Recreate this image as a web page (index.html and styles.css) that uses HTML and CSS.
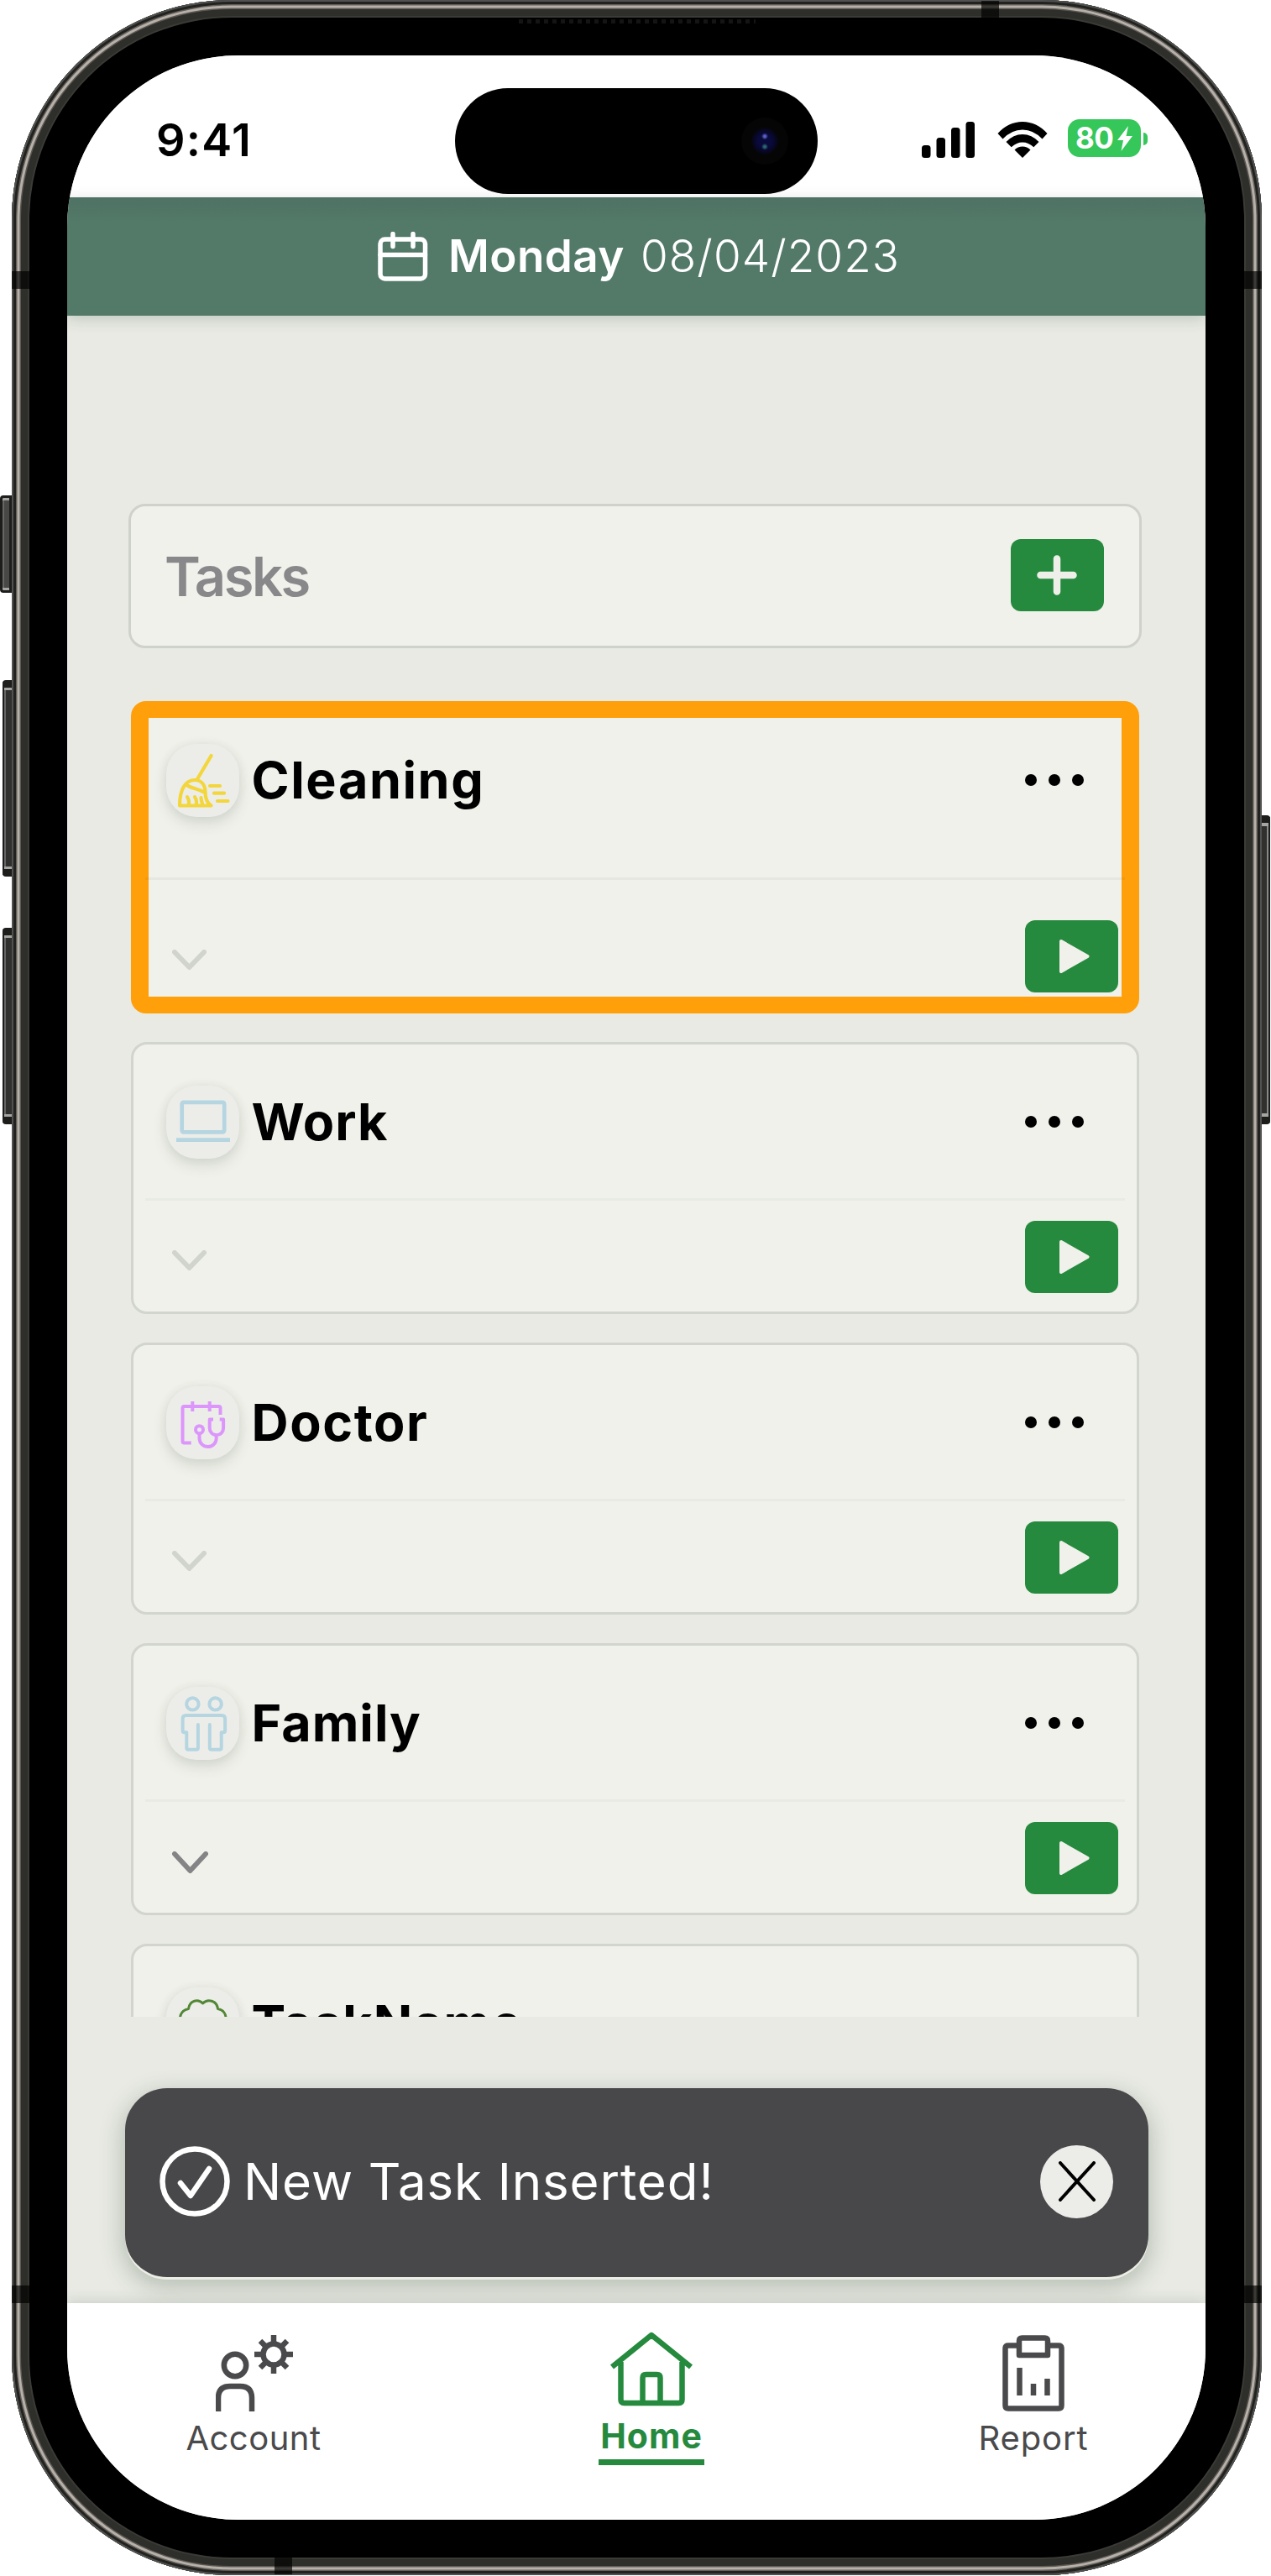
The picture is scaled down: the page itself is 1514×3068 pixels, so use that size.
FILE: index.html
```html
<!DOCTYPE html>
<html lang="en">
<head>
<meta charset="utf-8">
<title>Tasks</title>
<link rel="stylesheet" href="styles.css">
</head>
<body>
<div class="device">
  <i class="key key-mute"></i><i class="key key-up"></i><i class="key key-down"></i><i class="key key-power"></i>
  <i class="band band-tl"></i><i class="band band-tr"></i><i class="band band-bl"></i><i class="band band-br"></i>
  <i class="band band-top"></i><i class="band band-bottom"></i><i class="speaker"></i>
  <div class="screen">
    <div class="status">
      <span class="clock">9:41</span>
      <div class="island"><i class="camera"></i></div>
      <div class="indicators">
        <svg class="signal" width="63" height="43" viewBox="0 0 63 43"><rect x="0" y="28" width="10.5" height="15" rx="3.5"/><rect x="17.5" y="19" width="10.5" height="24" rx="3.5"/><rect x="35" y="7" width="10.5" height="36" rx="3.5"/><rect x="52.5" y="0" width="10.5" height="43" rx="3.5"/></svg>
        <svg class="wifi" width="60" height="43" viewBox="0 0 60 43"><path d="M0.500 14Q13 0 30 0t29.500 14l-6 6.500Q43 9.500 30 9.500T6.500 20.500z"/><path d="M10.500 24Q19 15 30 15t19.500 9l-6.200 6.200Q37 24.500 30 24.500T16.700 30.200z"/><path d="M20.500 33.500Q24.500 29.500 30 29.500t9.500 4L30 43z"/></svg>
        <div class="battery"><span>80</span><svg width="18" height="30" viewBox="0 0 18 30"><path d="M13 0 0 17h7L4.500 30 18 12h-7.500z"/></svg></div>
      </div>
    </div>
    <header class="datebar">
      <svg width="60" height="60" viewBox="0 0 60 60"><rect x="3" y="9" width="53.500" height="47" rx="5.500"/><path d="M3 27.500h53.500M18 2.500v15M42 2.500v15"/></svg>
      <strong>Monday</strong><span>08/04/2023</span>
    </header>
    <main class="content">
      <section class="taskbar">
        <h1>Tasks</h1>
        <button class="btn" aria-label="Add"><svg width="48" height="48" viewBox="0 0 48 48"><path class="plus" d="M24 4.500v39M4.500 24h39"/></svg></button>
      </section>
      <div class="list">
        <article class="card active">
          <div class="head"><span class="badge"><svg class="broom" width="87" height="87" viewBox="0 0 87 87"><path d="M53.600 14 37 42M16 73.500C16 54 23 43 34 43c8 0 12.500 6 12.500 14 0 8 3 14 7 16.500zM23.500 48.500C30 53 36 53 44 57M27 73v-4c0-4-2-5-2-6M36 73v-4c0-4-2-5-2-6M43.500 73c-1-4-2-6-2-9M52 50h12M57 58.700h12M61 68h12.500"/></svg></span><h2>Cleaning</h2><i class="dots"><b></b><b></b><b></b></i></div>
          <div class="foot"><svg class="chev" width="41" height="26" viewBox="0 0 41 26"><path d="M3 3l17.500 18L38 3"/></svg><button class="btn" aria-label="Start"><svg width="36" height="40" viewBox="0 0 36 40"><path class="play" d="M2 2 33.500 20 2 38z"/></svg></button></div>
        </article>
        <article class="card">
          <div class="head"><span class="badge"><svg class="laptop" width="87" height="87" viewBox="0 0 87 87"><rect x="18.700" y="19.800" width="50.500" height="35.500" rx="2"/><path d="M12 64.700h64"/></svg></span><h2 class="tight">Work</h2><i class="dots"><b></b><b></b><b></b></i></div>
          <div class="foot"><svg class="chev" width="41" height="26" viewBox="0 0 41 26"><path d="M3 3l17.500 18L38 3"/></svg><button class="btn" aria-label="Start"><svg width="36" height="40" viewBox="0 0 36 40"><path class="play" d="M2 2 33.500 20 2 38z"/></svg></button></div>
        </article>
        <article class="card">
          <div class="head"><span class="badge"><svg class="doctor" width="87" height="87" viewBox="0 0 87 87"><path d="M29.700 67.400H21.500q-2 0-2-2V26q0-2 2-2h41q2 0 2 2v8M31.300 18v12M51.700 18v12M39.500 57v5a10.100 10.100 0 0 0 20.200 0v-4M56 39.500h-4.300V50a8.200 8.200 0 0 0 16.400 0V39.500h-4.400"/><circle cx="39.500" cy="51.700" r="4.500"/></svg></span><h2>Doctor</h2><i class="dots"><b></b><b></b><b></b></i></div>
          <div class="foot"><svg class="chev" width="41" height="26" viewBox="0 0 41 26"><path d="M3 3l17.500 18L38 3"/></svg><button class="btn" aria-label="Start"><svg width="36" height="40" viewBox="0 0 36 40"><path class="play" d="M2 2 33.500 20 2 38z"/></svg></button></div>
        </article>
        <article class="card">
          <div class="head"><span class="badge"><svg class="family" width="87" height="87" viewBox="0 0 87 87"><circle cx="31.400" cy="20.400" r="7.200"/><circle cx="58.600" cy="20.400" r="7.200"/><path d="M37.900 45v27.700q0 2-2 2h-9.600q-2 0-2-2V54.300h-2.700q-2 0-2-2V38q0-4 4-4h42.500q4 0 4 4v14.300q0 2-2 2h-2.400v18.400q0 2-2 2h-9.900q-2 0-2-2V45"/></svg></span><h2 class="tight">Family</h2><i class="dots"><b></b><b></b><b></b></i></div>
          <div class="foot"><svg class="chev dark" width="43" height="28" viewBox="0 0 43 28"><path d="M3 3l18.500 20L40 3"/></svg><button class="btn" aria-label="Start"><svg width="36" height="40" viewBox="0 0 36 40"><path class="play" d="M2 2 33.500 20 2 38z"/></svg></button></div>
        </article>
        <article class="card">
          <div class="head"><span class="badge"><svg class="tree" width="87" height="87" viewBox="0 0 87 87"><path d="M24 48c-10-2-11-20 2.500-22.500C28 15 38 13.500 43.600 19 49 13.500 60 15 61.500 25.500 75 28 73 46 63 48zM43.600 40v34"/></svg></span><h2 class="tight">TaskName</h2></div>
        </article>
      </div>
    </main>
    <div class="toast">
      <svg width="84" height="84" viewBox="0 0 84 84"><circle cx="42" cy="42" r="38.500"/><path d="M25 44l12 15L59 27"/></svg>
      <p>New Task Inserted!</p>
      <button class="close" aria-label="Close"><svg width="44" height="48" viewBox="0 0 44 48"><path d="M2 2l40 44M42 2 2 46"/></svg></button>
    </div>
    <nav class="tabs">
      <a class="tab account"><svg width="92" height="92" viewBox="0 0 92 92"><circle cx="23" cy="36" r="13.200"/><path d="M3 91V75q0-14 14-14h12q14 0 14 14v16"/><circle cx="69" cy="23" r="12.500"/><path d="M69 0v11M69 35v11M46 23h11M81 23h11M53 7l7 7M78 32l7 7M85 7l-7 7M60 32l-7 7"/></svg><span>Account</span></a>
      <a class="tab home"><svg width="98" height="92" viewBox="0 0 98 92"><path d="M2 44 49 6l47 38M12.500 38v45q0 4 4 4h65q4 0 4-4V38M38.500 87V57q0-4 4-4h13q4 0 4 4v30"/></svg><span>Home</span></a>
      <a class="tab report"><svg width="74" height="92" viewBox="0 0 74 92"><path d="M18 12.500H7q-3.500 0-3.500 3.500v68q0 3.500 3.500 3.500h60q3.500 0 3.500-3.500V16q0-3.500-3.500-3.500H56"/><path d="M20 24V7q0-3.500 3.500-3.500h27Q54 3.500 54 7v17zM20.500 39v33M37 58v14M53.500 52v20"/></svg><span>Report</span></a>
    </nav>
  </div>
</div>
</body>
</html>
```
FILE: styles.css
```css
* { box-sizing: border-box; }
body { margin: 0; background: #fff; font-family: Inter, "Liberation Sans", sans-serif; color: #000; }
svg { display: block; fill: none; flex: none; stroke-linejoin: round; }
h1, h2, p { margin: 0; line-height: 1; white-space: nowrap; }
button { border: 0; padding: 0; display: flex; align-items: center; justify-content: center; }

/* Device shell */
.device {
  position: relative; width: 1489px; height: 3067px; margin-left: 14px; padding: 66px 67.5px 66px 66px;
  border-radius: 262px; background: #000;
  box-shadow: inset 0 0 0 2px #51524f, inset 0 0 0 5px #222320, inset 0 0 0 6.500px #63605b, inset 0 0 0 9.500px #b7b0a9, inset 0 0 0 11px #5b5853, inset 0 0 0 19px #2e2e2b, inset 0 0 0 21px #3a3a37;
}
.key { position: absolute; background: #30312f; border: 3px solid #1d1e1c; box-shadow: inset 0 3px #a5a5a2, inset 0 -3px #a5a5a2, inset 2px 0 #666; }
.key-mute { left: -14px; top: 590px; width: 14px; height: 116px; background: #484846; border-radius: 4px 0 0 4px; }
.key-up { left: -11px; top: 810px; width: 11px; height: 234px; border-width: 9px 0 9px 2px; border-radius: 4px 0 0 4px; }
.key-down { left: -11px; top: 1105px; width: 11px; height: 234px; border-width: 9px 0 9px 2px; border-radius: 4px 0 0 4px; }
.key-power { left: 1489px; top: 971px; width: 10px; height: 368px; border-width: 9px 2px 9px 0; border-radius: 0 4px 4px 0; box-shadow: inset 0 4px #a5a5a2, inset 0 -4px #a5a5a2, inset -2px 0 #888; }
.band { position: absolute; background: rgba(0, 0, 0, .68); width: 21px; height: 21px; }
.band-tl { left: 0; top: 323px; }
.band-tr { right: 0; top: 323px; }
.band-bl { left: 0; top: 2722px; }
.band-br { right: 0; top: 2722px; }
.band-top { left: 1155px; top: 1px; }
.band-bottom { left: 313px; bottom: 1px; }
.speaker { position: absolute; left: 604px; top: 23px; width: 282px; height: 5px; background: repeating-linear-gradient(90deg, #141414 0 5px, #000 5px 10px); }

.screen { height: 2935px; border-radius: 204px; overflow: hidden; background: #e8eae3; display: flex; flex-direction: column; }

/* Status bar */
.status { flex: none; height: 169px; background: #fff; display: flex; padding-left: 106px; }
.clock { width: 356px; padding-top: 74px; font-size: 54px; line-height: 1; font-weight: 600; letter-spacing: 1.3px; }
.island { width: 432px; height: 126px; margin-top: 39px; border-radius: 63px; background: #000; display: flex; align-items: center; justify-content: flex-end; padding-right: 35px; }
.camera { width: 56px; height: 56px; border-radius: 50%; background: radial-gradient(circle at 50% 40%, #5b62c8 0 1px, transparent 4px), radial-gradient(circle at 50% 62%, #2c6a70 0 1px, transparent 4px), radial-gradient(circle, #0a0a3c 0 8px, #060620 14px, #060506 16px 28px); }
.indicators { display: flex; padding-top: 76px; margin-left: 124px; align-items: flex-start; }
.signal, .wifi { fill: #000; margin-top: 3px; }
.wifi { margin-left: 27px; }
.battery { position: relative; width: 87px; height: 45px; margin-left: 24px; border-radius: 14px; background: #35c759; color: #fff; display: flex; align-items: center; padding-left: 9px; gap: 5px; font-size: 35px; font-weight: 700; line-height: 45px; letter-spacing: -.5px; }
.battery svg { fill: #fff; }
.battery::after { content: ""; position: absolute; left: 90px; top: 16px; width: 5px; height: 15px; background: #35c759; border-radius: 0 8px 8px 0; }

/* Date bar */
.datebar { flex: none; height: 141px; position: relative; z-index: 1; background: linear-gradient(#4e7263, #537969 30px); box-shadow: 0 4px 16px rgba(60, 85, 70, .22); color: #fff; display: flex; align-items: center; padding-left: 370px; font-size: 53px; line-height: 1; white-space: nowrap; }
.datebar svg { stroke: #fff; stroke-width: 5.500; stroke-linecap: round; }
.datebar strong { width: 229px; margin-left: 24px; font-weight: 600; letter-spacing: .4px; }
.datebar span { font-weight: 300; letter-spacing: 1.1px; }

/* Tasks */
.content { flex: none; height: 2026px; padding: 224px 75.500px 0 73px; }
.taskbar { height: 172px; border: 3px solid #cfd2cb; border-radius: 20px; background: #f0f1ea; display: flex; align-items: center; justify-content: space-between; padding: 0 42px 0 40px; }
h1 { font-size: 65px; font-weight: 600; color: #88888a; letter-spacing: -2.4px; }
.btn { width: 111.500px; height: 86px; border-radius: 12px; background: #258a3e; }
.taskbar .btn { margin-bottom: 3px; }
.plus { stroke: #efefea; stroke-width: 8.500; stroke-linecap: round; }
.play { fill: #f0f1ea; stroke: #f0f1ea; stroke-width: 4; }
.list { margin: 63px 3px 0; height: 1567px; overflow: hidden; display: flex; flex-direction: column; gap: 34px; }
.card { flex: none; height: 324px; border: 3px solid #d1d5ce; border-radius: 19px; background: #f0f1ea; display: flex; flex-direction: column; }
.head { height: 186px; margin: 0 14px; padding: 49px 49px 0 24.500px; border-bottom: 3px solid #e8eae4; display: flex; align-items: flex-start; }
.badge { width: 87px; height: 87px; border-radius: 36px; background: #ecede9; box-shadow: 0 8px 16px rgba(70, 90, 75, .15), 0 0 12px rgba(70, 90, 75, .07); }
h2 { margin-left: 15px; font-size: 61px; line-height: 87px; font-weight: 700; letter-spacing: 1.6px; }
.tight { letter-spacing: 1px; }
.dots { margin: 36px 0 0 auto; display: flex; gap: 13.500px; }
.dots b { width: 14.300px; height: 14.300px; border-radius: 50%; background: #000; }
.foot { flex: 1; display: flex; align-items: flex-start; justify-content: space-between; padding: 24px 22px 0 45.500px; }
.foot .btn { padding-left: 7px; }
.chev { margin-top: 35px; stroke: #d0d4cd; stroke-width: 6; stroke-linecap: round; }
.dark { stroke: #848486; }
.active { height: 372px; border: 0; border-radius: 18px; background: linear-gradient(#f0f1ea, #f0f1ea) 21px 20px / 1159px 332px no-repeat #ff9f0a; }
.active .head { height: 213px; margin: 0 17px; padding-top: 51px; border-color: rgba(80, 90, 80, .06); }
.active .foot { padding: 48px 25px 0 48.500px; }
.broom { stroke: #f3d63c; stroke-width: 4.200; stroke-linecap: round; }
.laptop { stroke: #b5d5e1; stroke-width: 4.700; }
.doctor { stroke: #dc96fb; stroke-width: 4; }
.family { stroke: #b5d5e1; stroke-width: 4; stroke-linecap: round; }
.tree { stroke: #528735; stroke-width: 3; }

/* Notification */
.toast { flex: none; position: relative; width: 1219px; height: 225px; margin: 85px 0 0 69px; border-radius: 50px; background: #48484a; color: #fff; box-shadow: 0 3px 0 #ecede5, 0 9px 26px 4px rgba(65, 85, 70, .28); display: flex; align-items: center; padding: 0 42px 3px 41px; }
.toast svg { stroke: #fff; stroke-width: 6.500; stroke-linecap: round; }
.toast p { margin-left: 16px; font-size: 60px; letter-spacing: .9px; }
.close { width: 87px; height: 87px; margin-left: auto; border-radius: 50%; background: #ecede9; }
.toast .close svg { stroke: #000; stroke-width: 4; }

/* Tab bar */
.tabs { flex: none; position: relative; height: 259px; margin-top: 31px; background: #fff; box-shadow: 0 -3px 14px rgba(65, 85, 70, .16); display: flex; color: #4a4a4c; font-size: 40px; line-height: 1; }
.tab { display: flex; flex-direction: column; align-items: center; white-space: nowrap; }
.tab svg { stroke: currentColor; stroke-width: 6.500; }
.account { width: 160px; margin-left: 142px; padding-top: 38px; letter-spacing: .5px; }
.account svg { margin-left: 2px; }
.account span, .report span { margin-top: 11px; }
.home { width: 126px; margin-left: 331px; padding-top: 32px; color: #258a3e; font-weight: 700; }
.home span { width: 126px; text-align: center; margin-top: 14px; padding-bottom: 7px; border-bottom: 7px solid #258a3e; font-size: 41px; letter-spacing: 1px; }
.report { width: 130px; margin-left: 327px; padding-top: 38px; letter-spacing: .9px; }
```
